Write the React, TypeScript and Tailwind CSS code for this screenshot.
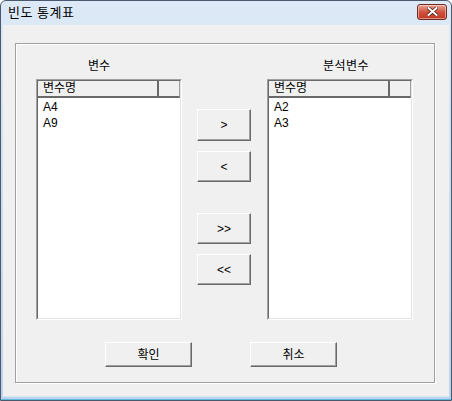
import React from 'react'

const font = { fontFamily: '"Liberation Sans", "Noto Sans CJK KR", sans-serif' }

function Btn({ label, className }: { label: string; className: string }) {
    return (
        <div
            className={`flex items-center justify-center bg-[#f0f0f0] border border-t-white border-l-white border-b-[#696969] border-r-[#696969] shadow-[inset_-1px_-1px_0_#a0a0a0] text-[12px] text-black ${className}`}
        >
            {label}
        </div>
    )
}

function ListBox({ items }: { items: string[] }) {
    return (
        <div className="w-[146px] h-[241px] border border-t-[#a0a0a0] border-l-[#a0a0a0] border-b-white border-r-white">
            <div className="w-full h-full bg-white border border-t-[#696969] border-l-[#696969] border-b-[#e3e3e3] border-r-[#e3e3e3]">
                <div className="flex h-[17px]">
                    <div className="w-[121px] h-full bg-[#f0f0f0] border-r-2 border-b-2 border-r-[#696969] border-b-[#696969] text-[12px] leading-[15px] pl-[5px] text-black">
                        변수명
                    </div>
                    <div className="flex-1 h-full bg-[#f0f0f0] border-b-2 border-b-[#696969] border-r border-r-[#a0a0a0]" />
                </div>
                <div className="pt-[1px] pl-[5px]">
                    {items.map((item, index) => (
                        <div key={index} className="h-[16px] text-[12px] leading-[16px] text-black">
                            {item}
                        </div>
                    ))}
                </div>
            </div>
        </div>
    )
}

export default function App() {
    return (
        <div style={font} className="w-[452px] h-[401px] flex flex-col rounded-t-[6px] border border-[#4a5a6e] bg-gradient-to-b from-[#dde9f6] to-[#bcd3ec] overflow-hidden">
            {/* title bar */}
            <div className="h-[24px] flex items-center justify-between pl-[7px] pr-[4px]">
                <span className="text-[13px] tracking-[0.5px] text-black">빈도 통계표</span>
                <div className="w-[30px] h-[16px] mt-[-3px] rounded-[3px] border border-[#6b2a22] bg-gradient-to-b from-[#e8a393] via-[#d0533f] to-[#c2351f] flex items-center justify-center shadow-[inset_0_0_0_1px_rgba(255,255,255,0.45)]">
                    <svg width="11" height="9" viewBox="0 0 11 9">
                        <path d="M1.5 1 L9.5 8 M9.5 1 L1.5 8" stroke="#4a1a12" strokeWidth="3.4" strokeLinecap="square" />
                        <path d="M1.5 1 L9.5 8 M9.5 1 L1.5 8" stroke="white" strokeWidth="2" strokeLinecap="square" />
                    </svg>
                </div>
            </div>

            {/* client */}
            <div className="flex-1 mx-[2px] mb-[2px] bg-[#f0f0f0] border-b border-b-[#d9e6f3] pt-[18px] pl-[12px]">
                <div className="w-[420px] h-[340px] border border-[#a0a0a0] shadow-[inset_1px_1px_0_white,1px_1px_0_white] flex flex-col">
                    <div className="flex pl-[20px] pt-[14px]">
                        <div className="flex flex-col">
                            <div className="h-[16px] text-[12px] leading-[16px] text-black pl-[52px]">변수</div>
                            <div className="mt-[5px]">
                                <ListBox items={['A4', 'A9']} />
                            </div>
                        </div>

                        <div className="flex flex-col ml-[15px] pt-[51px]">
                            <Btn label=">" className="w-[54px] h-[32px]" />
                            <Btn label="<" className="w-[54px] h-[31px] mt-[10px]" />
                            <Btn label=">>" className="w-[54px] h-[31px] mt-[31px]" />
                            <Btn label="<<" className="w-[54px] h-[31px] mt-[10px]" />
                        </div>

                        <div className="flex flex-col ml-[16px]">
                            <div className="h-[16px] text-[12px] leading-[16px] text-black pl-[56px] tracking-[0.5px]">분석변수</div>
                            <div className="mt-[5px]">
                                <ListBox items={['A2', 'A3']} />
                            </div>
                        </div>
                    </div>

                    <div className="flex mt-[22px] pl-[89px]">
                        <Btn label="확인" className="w-[87px] h-[25px]" />
                        <Btn label="취소" className="w-[87px] h-[25px] ml-[58px]" />
                    </div>
                </div>
            </div>
            <div className="h-[1px] bg-[#5fb8dd]" />
        </div>
    )
}
